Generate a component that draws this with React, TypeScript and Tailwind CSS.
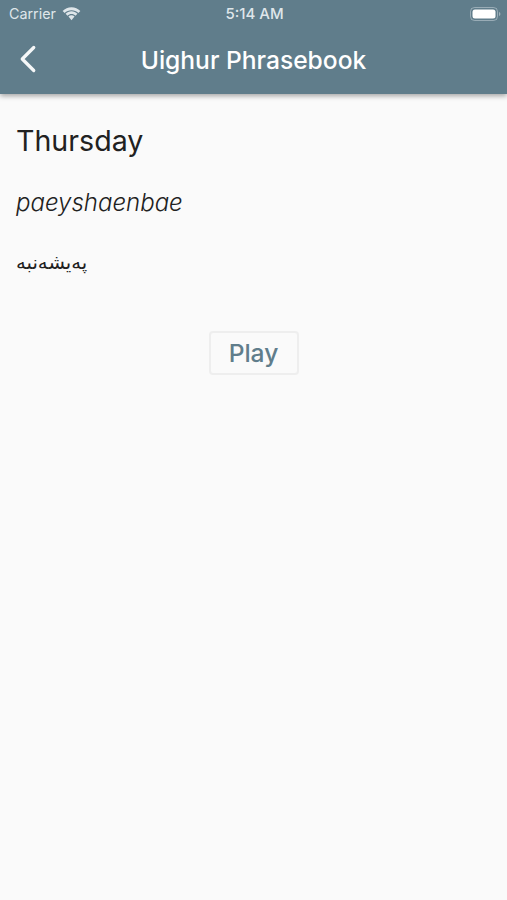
import { ChevronLeft } from "lucide-react";

function StatusBar() {
  return (
    <div className="grid h-7 grid-cols-3 items-center pl-[9px] pr-[6px] text-[#dfe6ea]">
      <div className="flex items-center gap-[6px]">
        <span className="text-[14.3px]">Carrier</span>
        <svg width="19" height="14" viewBox="0 0 18 13" fill="currentColor">
          <path d="M9 3c2.500 0 4.800 1 6.500 2.600L17.400 3.700C15.200 1.500 12.300.2 9 .2S2.800 1.500.6 3.700L2.500 5.600C4.200 4 6.500 3 9 3z" />
          <path d="M9 6.600c1.500 0 2.800.6 3.800 1.500l1.800-1.800C13.100 4.900 11.200 4 9 4S4.900 4.900 3.400 6.300l1.800 1.800c1-.9 2.300-1.500 3.800-1.500z" />
          <path d="M9 7.600c-1.100 0-2.100.4-2.900 1.200L9 12.500l2.900-3.700C11.100 8 10.100 7.600 9 7.600z" />
        </svg>
      </div>
      <span className="pr-[1px] text-center text-[15px] font-medium">5:14 AM</span>
      <svg className="justify-self-end" width="31" height="14" viewBox="0 0 31 14">
        <rect x="0.500" y="0.500" width="27" height="13" rx="4" fill="none" stroke="#dfe6ea" strokeOpacity="0.45" />
        <rect x="2.500" y="2.500" width="23" height="9" rx="2.500" fill="#ffffff" />
        <path d="M29 5v4c.8-.3 1.400-1.100 1.400-2S29.800 5.300 29 5z" fill="#dfe6ea" fillOpacity="0.5" />
      </svg>
    </div>
  );
}

export default function App() {
  return (
    <div className="flex min-h-[900px] flex-col bg-[#fafafa] font-['Inter',sans-serif]">
      <header className="h-[94px] bg-[#607d8b] shadow-[0_2px_5px_rgba(0,0,0,0.35)]">
        <StatusBar />
        <div className="relative flex h-[62px] items-center justify-center pt-[2px]">
          <ChevronLeft className="absolute left-[5px] top-[8px] text-[#f5f7f8]" size={46} strokeWidth={1.7} />
          <h1 className="text-[24.6px] font-medium text-white">Uighur Phrasebook</h1>
        </div>
      </header>
      <main className="flex flex-col px-4 pt-[28px]">
        <p className="h-[38px] text-[28.6px] leading-[38px] text-[#212121]">Thursday</p>
        <p className="mt-[29px] h-[28px] text-[24px] font-light italic leading-[28px] text-[#212121]">paeyshaenbae</p>
        <p dir="rtl" className="mt-[30px] h-[32px] self-start font-['DejaVu_Sans',sans-serif] text-[19.6px] leading-[32px] text-[#212121]">پەيشەنبە</p>
        <div className="mt-[52px] flex justify-center">
          <button className="h-[44px] w-[90px] rounded-[4px] border-2 border-[#eeeeee] text-[24.6px] font-medium text-[#607d8b]">Play</button>
        </div>
      </main>
    </div>
  );
}
